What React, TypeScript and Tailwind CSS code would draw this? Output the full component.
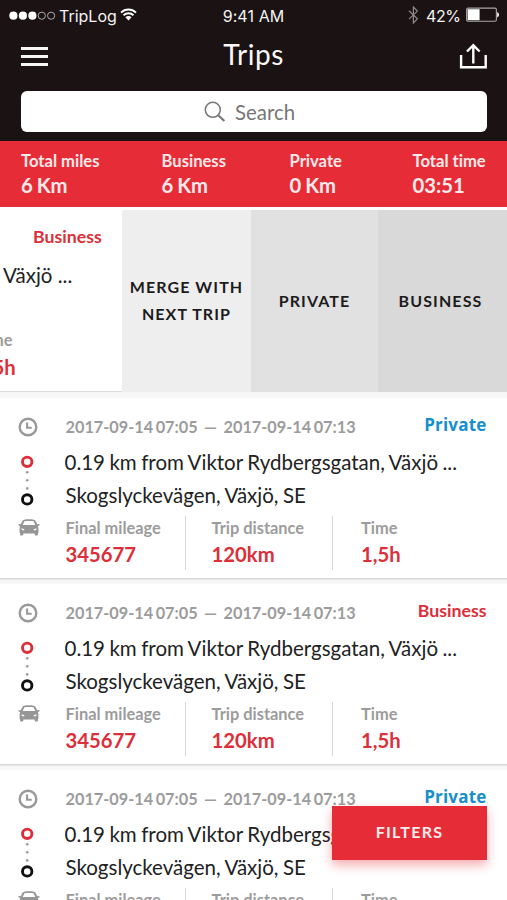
import React from 'react';

const lato = "font-['Lato',sans-serif] [font-variant-ligatures:none]";

function StatusBar() {
  return (
    <div className="flex h-[31px] items-center pl-[9px] pr-[7px] font-['Inter',sans-serif] text-[16px] leading-[20px] text-[#f4f2f2]">
      <div className="flex flex-1 items-center">
        <svg width="47" height="10" viewBox="0 0 47 10" className="shrink-0">
          <circle cx="4.4" cy="4.7" r="4.1" fill="#fff" />
          <circle cx="13.9" cy="4.7" r="4.1" fill="#fff" />
          <circle cx="23.4" cy="4.7" r="4.1" fill="#fff" />
          <circle cx="32.8" cy="4.7" r="3.6" fill="none" stroke="#bdb9b9" strokeWidth="0.9" />
          <circle cx="42.1" cy="4.7" r="3.6" fill="none" stroke="#bdb9b9" strokeWidth="0.9" />
        </svg>
        <span className="ml-[3px] w-[58px] whitespace-nowrap">TripLog</span>
        <svg width="17" height="13" viewBox="0 0 17 13" className="ml-[3px] mb-[2px] shrink-0">
          <path d="M1 4.6C5.2 .4 11.8 .4 16 4.6M3.5 7.3C6.3 4.6 10.7 4.6 13.5 7.3" fill="none" stroke="#fff" strokeWidth="1.9" />
          <path d="M5.4 9.2c1.8-1.6 4.4-1.6 6.2 0L8.5 12.4z" fill="#fff" />
        </svg>
      </div>
      <span className="mr-[2px] whitespace-nowrap tracking-[0.1px]">9:41 AM</span>
      <div className="flex flex-1 items-center justify-end">
        <svg width="11" height="18" viewBox="0 0 11 18" className="-mt-[2px]">
          <path d="M1 4.8l8.4 8L5.4 17V1l4 4.1-8.4 8" fill="none" stroke="#8d8888" strokeWidth="1.2" />
        </svg>
        <span className="ml-[7px] w-[33px] whitespace-nowrap tracking-[-0.4px]">42%</span>
        <svg width="34" height="16" viewBox="0 0 34 16" className="ml-[7px] -mt-[2px]">
          <rect x="0.6" y="1.1" width="29.8" height="13.2" rx="1.5" fill="none" stroke="#aaa6a6" strokeWidth="1.1" />
          <rect x="1.6" y="2.2" width="12" height="11" fill="#fff" />
          <path d="M31.2 5.2c2.4.4 2.4 4.6 0 5z" fill="#fff" />
        </svg>
      </div>
    </div>
  );
}

function Header() {
  return (
    <header className="h-[141px] bg-[#1b1213]">
      <StatusBar />
      <div className="flex h-[50px] items-center justify-between px-[20px]">
        <div className="flex w-[28px] flex-col gap-[5px] pl-px pt-px">
          <i className="h-[3px] bg-[#f6f5f5]" />
          <i className="h-[3px] bg-[#f6f5f5]" />
          <i className="h-[3px] bg-[#f6f5f5]" />
        </div>
        <h1 className="-mt-[4px] text-[28px] leading-[32px] tracking-[0.5px] text-[#faf8f8]">Trips</h1>
        <svg width="28" height="28" viewBox="0 0 28 28" fill="none" stroke="#fff" strokeWidth="2.4">
          <path d="M2.1 13v12.3h24.6V13M14.3 21.5V3.2M8 9.5l6.3-6.3 6.3 6.3" />
        </svg>
      </div>
      <div className="ml-[21px] mr-[20px] mt-[10px] flex h-[41px] items-center rounded-[6px] bg-white pl-[183px]">
        <svg width="22" height="22" viewBox="0 0 22 22" fill="none" stroke="#777">
          <circle cx="8.8" cy="8.8" r="7.5" strokeWidth="1.5" />
          <path d="M14.2 14.2l6.2 5.8" strokeWidth="2.2" />
        </svg>
        <span className="ml-[9px] mt-px text-[20.400px] leading-[24px] text-[#777]">Search</span>
      </div>
    </header>
  );
}

const totals = [
  { label: 'Total miles', value: '6 Km', box: 'w-[140.5px]' },
  { label: 'Business', value: '6 Km', box: 'w-[128px]' },
  { label: 'Private', value: '0 Km', box: 'w-[123px]' },
  { label: 'Total time', value: '03:51', box: 'w-[80px]' },
];

function Totals() {
  return (
    <section className="flex h-[66px] bg-[#e62d37] pl-[21px] pt-[10px] font-bold text-[#ffe9ea]">
      {totals.map((t) => (
        <div key={t.label} className={`${t.box} whitespace-nowrap`}>
          <div className="text-[16.600px] leading-[20px]">{t.label}</div>
          <div className="mt-[2px] text-[20.300px] leading-[24px] [word-spacing:-1px]">{t.value}</div>
        </div>
      ))}
    </section>
  );
}

function SwipedTrip() {
  const action = 'flex items-center justify-center text-center text-[16px] font-bold leading-[27px] tracking-[1.1px] text-[#1d1b1c] pb-px';
  return (
    <section className="mt-[3px] flex h-[182px]">
      <div className="flex w-[122px] flex-col overflow-hidden whitespace-nowrap border-b border-[#dcdcdc] bg-white">
        <div className="mt-[16px] pl-[33px] text-[17.700px] font-bold leading-[22px] text-[#dc2f3a]">Business</div>
        <div className="mt-[15px] pl-[3px] text-[20.500px] leading-[24px] text-[#222]">Växjö ...</div>
        <div className="ml-[-24px] mt-[43px] text-[16.400px] font-bold leading-[20px] text-[#9c9c9c]">Time</div>
        <div className="ml-[-24px] mt-[5px] text-[20.300px] font-bold leading-[24px] text-[#dc2f3a]">1,5h</div>
      </div>
      <div className={`${action} w-[129px] bg-[#eeeeee]`}>
        <span className="-mt-px">MERGE WITH<br />NEXT TRIP</span>
      </div>
      <div className={`${action} w-[127px] bg-[#e2e1e1]`}>PRIVATE</div>
      <div className={`${action} w-[129px] bg-[#d9d9d9] pr-[4px]`}>BUSINESS</div>
    </section>
  );
}

function ClockIcon() {
  return (
    <svg width="20" height="20" viewBox="0 0 20 20" fill="none" stroke="#999" strokeWidth="2.4">
      <circle cx="10" cy="10" r="8.3" />
      <path d="M9.1 5.600v5.200h4.600" strokeWidth="2.1" />
    </svg>
  );
}

function RouteIcon() {
  return (
    <svg width="14" height="52" viewBox="0 0 14 52" fill="none" strokeWidth="2.9">
      <circle cx="7.2" cy="6.8" r="4.7" stroke="#df2d38" />
      <circle cx="7.2" cy="44.4" r="4.7" stroke="#111" />
      <g fill="#999">
        <circle cx="7.2" cy="17.2" r="1.3" />
        <circle cx="7.2" cy="25.3" r="1.3" />
        <circle cx="7.2" cy="33.4" r="1.3" />
      </g>
    </svg>
  );
}

function CarIcon() {
  return (
    <svg width="22" height="17" viewBox="0 0 22 17">
      <path
        fillRule="evenodd"
        fill="#969696"
        d="M6.200.7C9 .1 13 .1 15.800.7c1 .2 1.600.8 2 1.600L19.200 5.300l1.500-.2c1-.1 1.300 1 .5 1.400l-1.400.6c.4.7.6 1.500.6 2.400v4.200c0 .3-.2.500-.5.500v1.200c0 .7-.5 1.100-1.100 1.100h-1c-.7 0-1.100-.4-1.100-1.100v-1H5.300v1c0 .7-.4 1.100-1.100 1.100h-1c-.6 0-1.100-.4-1.100-1.100v-1.200c-.3 0-.5-.2-.5-.5V9.500c0-.9.2-1.700.6-2.400L.8 6.500C0 6.100.3 5 1.300 5.100l1.500.2L4.200 2.300c.4-.8 1-1.400 2-1.600zM6.400 2.300L4.700 6h12.600l-1.700-3.700c-2.700-.5-6.500-.5-9.200 0zM3.500 9.300l.3 1.700 2.300.4.3-1.100zM18.500 9.300l-.3 1.700-2.300.4-.3-1.100z"
      />
    </svg>
  );
}

const metrics = [
  { label: 'Final mileage', value: '345677', box: 'w-[120px] border-r' },
  { label: 'Trip distance', value: '120km', box: 'w-[147px] border-r pl-[26px]' },
  { label: 'Time', value: '1,5h', box: 'w-[120px] pl-[28.500px]' },
];

function TripCard({ kind }: { kind: 'Private' | 'Business' }) {
  return (
    <article className="flex h-[181px] shrink-0 border-b border-[#d8d8d8] bg-white shadow-[0_1px_1px_#e8e8e8]">
      <div className="flex w-[65.500px] flex-col items-start pl-[18px]">
        <div className="mt-[19px]"><ClockIcon /></div>
        <div className="ml-[2px] mt-[18px]"><RouteIcon /></div>
        <div className="mt-[12px]"><CarIcon /></div>
      </div>
      <div className="flex-1 whitespace-nowrap">
        <div className="flex h-[48px] items-start justify-between pr-[20.500px]">
          <div className="mt-[18.500px] flex text-[16.300px] font-bold leading-[20px] text-[#9c9c9c]">
            <span className="w-[132px] [word-spacing:-1.500px]">2017-09-14 07:05</span>
            <span className="w-[26px] pl-[6.500px]">—</span>
            <span className="[word-spacing:-1.500px]">2017-09-14 07:13</span>
          </div>
          {kind === 'Private' ? (
            <span className="mt-[16px] font-['Open_Sans',sans-serif] text-[17px] font-bold leading-[22px] tracking-[0.200px] text-[#168fca]">Private</span>
          ) : (
            <span className="mt-[16px] text-[17.700px] font-bold leading-[22px] text-[#dc2f3a]">Business</span>
          )}
        </div>
        <div className="-ml-px mt-[4px] h-[24px] overflow-hidden text-[20.500px] leading-[24px] text-[#222] [word-spacing:-0.800px]">
          0.19 km from Viktor Rydbergsgatan, Växjö ...
        </div>
        <div className="mt-[8.500px] text-[20.500px] leading-[24px] text-[#222] [word-spacing:-0.800px]">Skogslyckevägen, Växjö, SE</div>
        <div className="mt-[9px] flex h-[54px]">
          {metrics.map((m) => (
            <div key={m.label} className={`${m.box} border-[#d8d8d8]`}>
              <div className="mt-[2px] text-[16.400px] font-bold leading-[20px] text-[#9c9c9c]">{m.label}</div>
              <div className="mt-[4px] text-[20.300px] font-bold leading-[24px] text-[#dc2f3a]">{m.value}</div>
            </div>
          ))}
        </div>
      </div>
    </article>
  );
}

export default function App() {
  return (
    <main className={`relative h-[900px] w-[507px] overflow-hidden bg-white ${lato}`}>
      <Header />
      <Totals />
      <SwipedTrip />
      <div className="flex flex-col gap-[5px] bg-[#f7f7f7] pt-[6px]">
        <TripCard kind="Private" />
        <TripCard kind="Business" />
        <TripCard kind="Private" />
      </div>
      <button className="absolute bottom-[40px] right-[20px] h-[54px] w-[155px] bg-[#e62d37] pb-[2px] text-[16px] font-bold tracking-[1.3px] text-[#ffeced] shadow-[0_5px_10px_rgba(230,45,55,0.4)]">
        FILTERS
      </button>
    </main>
  );
}
